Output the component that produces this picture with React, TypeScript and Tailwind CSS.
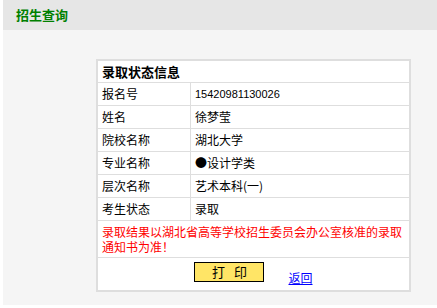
import React from 'react';

const rows: { label: string; value: string; mono?: boolean }[] = [
  { label: '报名号', value: '15420981130026', mono: true },
  { label: '姓名', value: '徐梦莹' },
  { label: '院校名称', value: '湖北大学' },
  { label: '专业名称', value: '●设计学类' },
  { label: '层次名称', value: '艺术本科(一)' },
  { label: '考生状态', value: '录取' },
];

const cjk = "font-['Noto_Sans_CJK_SC','Noto_Sans',sans-serif]";

const App: React.FC = () => {
  return (
    <div className={`w-[437px] h-[308px] bg-white pl-[3px] ${cjk} text-black`}>
      {/* title bar */}
      <div className="h-[30px] bg-[#e6e6e6] pl-[13px] flex items-center">
        <span className="text-[13px] leading-[14px] font-bold text-[#008000]">招生查询</span>
      </div>

      {/* body */}
      <div className="h-[275px] bg-[#f5f5f5] pt-[29px] pl-[93px]">
        <div className="w-[315px] border-2 border-[#dedede] bg-white">
          <div className="h-[22px] border-b border-[#dedede] flex items-center pl-[4px]">
            <span className="text-[13px] leading-[14px] font-bold">录取状态信息</span>
          </div>

          {rows.map((r) => (
            <div key={r.label} className="h-[23px] border-b border-[#dedede] flex">
              <div className="w-[93px] border-r border-[#dedede] flex items-center pl-[4px] text-[12px] leading-[14px]">
                {r.label}
              </div>
              <div className="flex-1 flex items-center pl-[4px] text-[12px] leading-[14px]">
                {r.mono ? (
                  <span className="font-['Liberation_Sans',sans-serif] text-[11px]">{r.value}</span>
                ) : (
                  r.value
                )}
              </div>
            </div>
          ))}

          <div className="h-[37px] border-b border-[#dedede] flex items-center px-[4px]">
            <p className="text-[12px] leading-[15px] text-[#ff0000]">
              录取结果以湖北省高等学校招生委员会办公室核准的录取通知书为准！
            </p>
          </div>

          <div className="h-[32px] flex justify-center items-start">
            <button className="mt-[4px] w-[70px] h-[20px] bg-[#ffe566] border border-black text-[13px] leading-[14px] tracking-[3px] pl-[3px]">
              打 印
            </button>
            <a href="#" className="ml-[24px] mt-[13px] text-[12px] leading-[14px] text-[#0000ff] underline">
              返回
            </a>
          </div>
        </div>
      </div>
    </div>
  );
};

export default App;
